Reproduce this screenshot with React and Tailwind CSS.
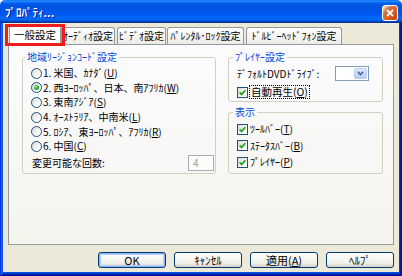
import React from "react";

const jp = "font-['Noto_Sans_CJK_JP','Noto_Sans',sans-serif]";

function Mn({ children }) {
  return <span className="underline underline-offset-[1px]">{children}</span>;
}

function Radio({ checked }) {
  return (
    <span className="flex h-[11px] w-[11px] shrink-0 items-center justify-center rounded-full border border-[#1c5180] bg-[linear-gradient(135deg,#d8d8d2,#ffffff_75%)]">
      {checked && (
        <span className="h-[5px] w-[5px] rounded-full bg-[radial-gradient(circle_at_35%_35%,#9be69b,#21a121_60%,#167816)]" />
      )}
    </span>
  );
}

function Check() {
  return (
    <span className="flex h-[11px] w-[11px] shrink-0 items-center justify-center border border-[#1c5180] bg-[linear-gradient(135deg,#d8d8d2,#ffffff_75%)]">
      <svg width="7" height="7" viewBox="0 0 7 7">
        <path d="M0.6 3.4 L2.6 5.4 L6.4 1.2" stroke="#21a121" strokeWidth="1.7" fill="none" />
      </svg>
    </span>
  );
}

function Tab({ label, className }) {
  return (
    <div
      className={`flex h-[17px] items-center justify-center rounded-t-[3px] border border-b-0 border-[#919b9c] bg-[linear-gradient(#ffffff,#ecebe6)] text-[10px] leading-none text-black ${className}`}
    >
      {label}
    </div>
  );
}

function Button({ children, main }) {
  return (
    <div
      className={`flex h-[16px] w-[68px] items-center justify-center rounded-[3px] border border-[#003c74] bg-[linear-gradient(#ffffff,#f0f0ea_70%,#d6d0c5)] text-[11px] leading-none text-black ${
        main ? "shadow-[inset_0_0_0_1px_#8cb4f2,inset_0_0_0_2px_#b7d0f8]" : ""
      }`}
    >
      {children}
    </div>
  );
}

const regions = [
  { n: "1. 米国、ｶﾅﾀﾞ", k: "U" },
  { n: "2. 西ﾖｰﾛｯﾊﾟ、日本、南ｱﾌﾘｶ", k: "W", on: true },
  { n: "3. 東南ｱｼﾞｱ", k: "S" },
  { n: "4. ｵｰｽﾄﾗﾘｱ、中南米", k: "L" },
  { n: "5. ﾛｼｱ、東ﾖｰﾛｯﾊﾟ、ｱﾌﾘｶ", k: "R" },
  { n: "6. 中国", k: "C" },
];

export default function App() {
  return (
    <div className={`flex h-[276px] w-[402px] flex-col overflow-hidden rounded-t-[5px] ${jp}`}>
      {/* title bar */}
      <div className="flex h-[23px] shrink-0 items-center justify-between bg-[linear-gradient(#0058ee_0%,#3593ff_4%,#288eff_6%,#127dff_8%,#036ffc_10%,#0262ee_14%,#0057e5_20%,#0054e3_24%,#0055eb_56%,#005bf5_66%,#026afe_76%,#0062ef_86%,#0052d6_92%,#0040ab_94%,#003092_100%)] pl-[5px] pr-[4px] pt-[2px]">
        <span className="text-[11px] font-bold leading-none text-white [text-shadow:1px_1px_#0f1089]">
          ﾌﾟﾛﾊﾟﾃｨ...
        </span>
        <div className="flex h-[16px] w-[16px] items-center justify-center rounded-[3px] border border-white bg-[radial-gradient(circle_at_90%_90%,#cc4600_0%,#dc6527_55%,#cd7546_70%,#ffccb2_90%,#ffffff_100%)]">
          <svg width="8" height="8" viewBox="0 0 8 8">
            <path d="M1 1 L7 7 M7 1 L1 7" stroke="white" strokeWidth="1.8" />
          </svg>
        </div>
      </div>

      {/* body */}
      <div className="flex flex-1 flex-col bg-[#ece9d8] px-[3px] pb-[4px] shadow-[inset_1px_0_#0831d9,inset_-1px_0_#00138c,inset_0_-1px_#00138c,inset_2px_0_#166aee,inset_-2px_0_#001ea0,inset_0_-2px_#001ea0,inset_3px_0_#0855dd,inset_-3px_0_#003bda,inset_0_-3px_#003bda,inset_0_-4px_#0855dd]">
        {/* tabs */}
        <div className="flex h-[21px] items-end pl-[6px]">
          <div className="relative z-10 -mb-[1px] flex h-[20px] w-[52px] items-center justify-center rounded-t-[3px] border border-b-0 border-[#919b9c] bg-white text-[10.5px] leading-none text-black">
            一般設定
            <div className="absolute -left-[5px] -top-[2px] h-[22px] w-[60px] border-[3px] border-[#ee1c1c]" />
          </div>
          <Tab label="ｵｰﾃﾞｨｵ設定" className="w-[54px]" />
          <Tab label="ﾋﾞﾃﾞｵ設定" className="ml-[2px] w-[49px]" />
          <Tab label="ﾊﾟﾚﾝﾀﾙ･ﾛｯｸ設定" className="ml-[1px] w-[77px]" />
          <Tab label="ﾄﾞﾙﾋﾞｰﾍｯﾄﾞﾌｫﾝ設定" className="ml-[2px] w-[96px]" />
        </div>

        {/* panel */}
        <div className="mx-[5px] flex h-[201px] shrink-0 items-start gap-[12px] border border-[#919b9c] bg-[linear-gradient(#fcfcfe,#f4f3ee)] pl-[13px] pt-[6px] text-[10px] leading-none text-black">
          {/* region group */}
          <fieldset className="h-[123px] w-[194px] rounded-[3px] border border-[#d0d0bf]">
            <legend className="ml-[2px] px-[2px] text-[10px] leading-[12px] text-[#0046d5]">
              地域ﾘｰｼﾞｮﾝｺｰﾄﾞ設定
            </legend>
            <div className="flex flex-col pl-[8px] pr-[1px] pt-[3px]">
              {regions.map((r) => (
                <div key={r.k} className="flex h-[14.6px] items-center gap-[1px]">
                  <Radio checked={r.on} />
                  <span>
                    {r.n}(<Mn>{r.k}</Mn>)
                  </span>
                </div>
              ))}
              <div className="mt-[1px] flex h-[16px] items-center justify-between pl-[1px]">
                <span>変更可能な回数:</span>
                <div className="flex h-[16px] w-[26px] items-center border border-[#a5acb5] bg-[#fbfbf9] pl-[4px] text-[#a0a0a0]">
                  4
                </div>
              </div>
            </div>
          </fieldset>

          {/* right column */}
          <div className="flex w-[155px] flex-col gap-[4px]">
            <fieldset className="h-[51px] rounded-[3px] border border-[#d0d0bf]">
              <legend className="ml-[4px] px-[2px] text-[10px] leading-[12px] text-[#0046d5]">
                ﾌﾟﾚｲﾔｰ設定
              </legend>
              <div className="mt-[3px] flex h-[15px] items-center justify-between pl-[8px] pr-[13px]">
                <span>ﾃﾞﾌｫﾙﾄDVDﾄﾞﾗｲﾌﾞ:</span>
                <div className="flex h-[15px] w-[34px] items-center justify-end border border-[#7f9db9] bg-white p-[1px]">
                  <div className="flex h-full w-[13px] items-center justify-center rounded-[2px] border border-[#b9cbf3] bg-[linear-gradient(#dfe9fd,#b6c9f7)]">
                    <svg width="7" height="5" viewBox="0 0 7 5">
                      <path d="M0.8 0.8 L3.5 3.6 L6.2 0.8" stroke="#4d6185" strokeWidth="1.6" fill="none" />
                    </svg>
                  </div>
                </div>
              </div>
              <div className="mt-[4px] flex h-[14px] items-center gap-[1px] pl-[8px]">
                <Check />
                <span className="border border-dotted border-black px-[1px] py-[1px] text-[10.5px]">
                  自動再生(<Mn>O</Mn>)
                </span>
              </div>
            </fieldset>

            <fieldset className="h-[68px] rounded-[3px] border border-[#d0d0bf]">
              <legend className="ml-[4px] px-[2px] text-[10px] leading-[12px] text-[#0046d5]">
                表示
              </legend>
              <div className="flex flex-col pl-[8px] pt-[3px]">
                {[
                  ["ﾂｰﾙﾊﾞｰ", "T"],
                  ["ｽﾃｰﾀｽﾊﾞｰ", "B"],
                  ["ﾌﾟﾚｲﾔｰ", "P"],
                ].map(([t, k]) => (
                  <div key={k} className="flex h-[16.5px] items-center gap-[2px]">
                    <Check />
                    <span>
                      {t}(<Mn>{k}</Mn>)
                    </span>
                  </div>
                ))}
              </div>
            </fieldset>
          </div>
        </div>

        {/* buttons */}
        <div className="mr-[5px] mt-[7px] flex justify-end gap-[8px]">
          <Button main>OK</Button>
          <Button>ｷｬﾝｾﾙ</Button>
          <Button>
            適用(<Mn>A</Mn>)
          </Button>
          <Button>ﾍﾙﾌﾟ</Button>
        </div>
      </div>
    </div>
  );
}
